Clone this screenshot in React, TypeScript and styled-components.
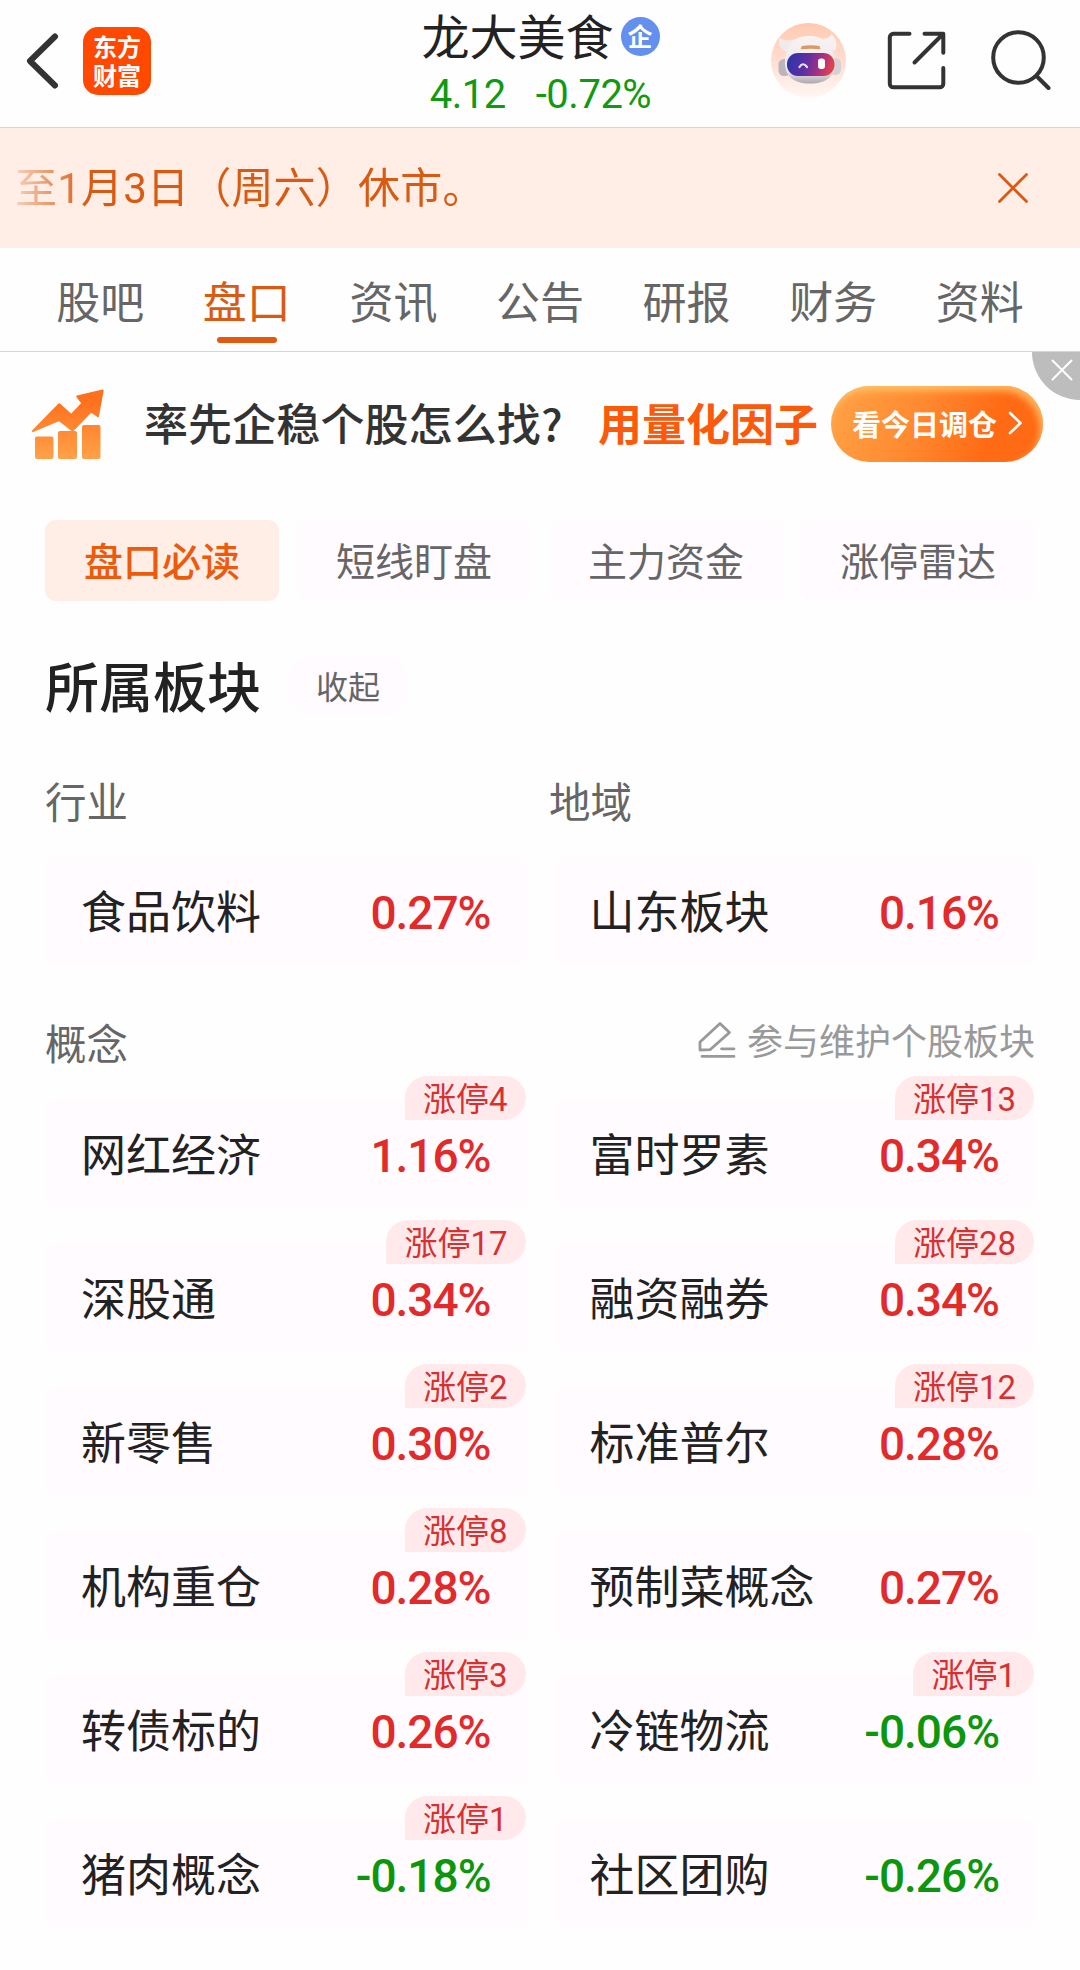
import React from "react";
import styled, { createGlobalStyle } from "styled-components";

const GlobalStyle = createGlobalStyle`
  *, *::before, *::after { box-sizing: border-box; }
  body {
    margin: 0;
    background: #fefefe;
    font-family: Roboto, "Noto Sans CJK SC", sans-serif;
    color: #222;
  }
  button { font: inherit; color: inherit; border: 0; background: none; padding: 0; }
  svg { display: block; flex: none; }
`;

const Page = styled.div`
  width: 1080px;
  height: 1970px;
  overflow: hidden;
  background: #fefefe;
`;

/* Header */

const Header = styled.header`
  display: grid;
  grid-template-columns: 1fr auto 1fr;
  height: 128px;
  padding: 0 24px 0 25px;
  border-bottom: 1px solid #d8d4d3;
`;

const HeaderSide = styled.div<{ $end?: boolean }>`
  display: flex;
  align-items: center;
  justify-content: ${(p) => (p.$end ? "flex-end" : "flex-start")};
  height: 121px;
  padding-right: ${(p) => (p.$end ? 5 : 0)}px;
`;

const Logo = styled.div`
  width: 68px;
  height: 68px;
  margin-left: 22px;
  padding-top: 4px;
  border-radius: 15px;
  background: #ff4800;
  color: #fff;
  font: 700 24px/29px "Noto Sans CJK SC", sans-serif;
  text-align: center;
`;

const StockTitle = styled.div`
  display: flex;
  flex-direction: column;
  align-items: center;
`;

const StockName = styled.h1`
  display: flex;
  align-items: center;
  gap: 7px;
  margin: 0;
  padding-top: 11px;
  height: 67px;
  font-size: 48px;
  line-height: 60px;
  font-weight: 400;
`;

const CompanyMark = styled.span`
  width: 39px;
  height: 39px;
  margin-top: -6px;
  border-radius: 50%;
  background: #638fee;
  color: #fff;
  font: 700 25px/37px "Noto Sans CJK SC", sans-serif;
  text-align: center;
`;

const Quote = styled.div`
  display: flex;
  gap: 30px;
  margin-top: 5px;
  color: #119a11;
  font-size: 40px;
  line-height: 46px;
  letter-spacing: -0.5px;
`;

const IconButton = styled.button<{ $gap?: number }>`
  margin-left: ${(p) => p.$gap ?? 0}px;
`;

/* Notice */

const Notice = styled.div`
  display: flex;
  align-items: center;
  justify-content: space-between;
  height: 120px;
  padding: 0 52px 0 15px;
  background: #ffeee6;
`;

const NoticeText = styled.span`
  padding-top: 2px;
  color: #d95a12;
  font-size: 42px;
  line-height: 60px;
  letter-spacing: 0.2px;
  mask-image: linear-gradient(90deg, rgba(0, 0, 0, 0.2) 0, #000 74px);
`;

/* Tabs */

const Tabs = styled.nav`
  display: grid;
  grid-template-columns: repeat(7, 1fr);
  height: 104px;
  padding: 0 27px;
  border-bottom: 1px solid #d6d6d6;
`;

const Tab = styled.button<{ $active?: boolean }>`
  display: flex;
  flex-direction: column;
  align-items: center;
  padding-top: 26px;
  font-size: 44px;
  line-height: 60px;
  color: ${(p) => (p.$active ? "#d95a12" : "#666")};
  &::after {
    content: "";
    width: 60px;
    height: 6px;
    margin-top: 3px;
    border-radius: 3px;
    background: ${(p) => (p.$active ? "#e05a10" : "transparent")};
  }
`;

/* Promotion */

const Promo = styled.section`
  position: relative;
  display: flex;
  align-items: center;
  height: 144px;
  padding: 0 37px 0 31px;
`;

const PromoQuestion = styled.span`
  width: 454px;
  margin: -5px 0 0 39px;
  color: #333;
  font: 500 44px/60px "Noto Sans CJK SC", sans-serif;
  letter-spacing: 0.1px;
`;

const PromoAnswer = styled.span`
  margin-top: -5px;
  color: #fa5a0a;
  font: 700 44px/60px "Noto Sans CJK SC", sans-serif;
`;

const PromoButton = styled.button`
  display: flex;
  align-items: center;
  gap: 11px;
  width: 212px;
  height: 76px;
  margin-left: auto;
  padding: 0 0 3px 21px;
  border-radius: 38px;
  background: linear-gradient(110deg, #ffa044 5%, #ff8a30 40%, #ff6a14 75%);
  box-shadow: inset -3px 5px 7px rgba(255, 205, 115, 0.75);
  color: #fff;
  font: 700 29px/40px "Noto Sans CJK SC", sans-serif;
`;

const PromoClose = styled.button`
  position: absolute;
  top: 0;
  right: 0;
  display: flex;
  align-items: flex-start;
  width: 48px;
  height: 48px;
  padding: 7px 0 0 19px;
  border-bottom-left-radius: 48px;
  background: #bdbdbd;
`;

/* Content */

const Content = styled.main`
  padding: 24px 45px 0;
`;

const Chips = styled.div`
  display: grid;
  grid-template-columns: repeat(4, 1fr);
  gap: 18px;
`;

const Chip = styled.button<{ $active?: boolean }>`
  height: 81px;
  padding-top: 6px;
  border-radius: 11px;
  font-size: 39px;
  line-height: 75px;
  background: ${(p) => (p.$active ? "#ffeee6" : "#fffbff")};
  color: ${(p) => (p.$active ? "#ee5a0c" : "#666")};
  font-weight: ${(p) => (p.$active ? 500 : 400)};
`;

const SectionHead = styled.div`
  display: flex;
  align-items: center;
  gap: 25px;
  height: 60px;
  margin-top: 54px;
`;

const SectionTitle = styled.h2`
  margin: 0;
  padding-top: 10px;
  font-size: 54px;
  line-height: 66px;
  font-weight: 500;
`;

const FoldButton = styled.button`
  width: 124px;
  height: 60px;
  margin-top: -1px;
  border-radius: 30px;
  background: #fffbff;
  color: #666;
  font-size: 32px;
`;

const LabelRow = styled.div<{ $top: number }>`
  display: grid;
  grid-template-columns: 1fr 486px;
  align-items: center;
  height: 56px;
  margin-top: ${(p) => p.$top}px;
`;

const Label = styled.span`
  padding-top: 3px;
  color: #666;
  font-size: 41.5px;
  line-height: 56px;
`;

const EditLink = styled.button`
  display: flex;
  align-items: center;
  justify-content: flex-end;
  gap: 11px;
  height: 48px;
  margin-top: -4px;
  color: #999;
  font-size: 36px;
  line-height: 48px;
  svg { margin-top: -6px; }
`;

const CardGrid = styled.div<{ $top: number }>`
  display: grid;
  grid-template-columns: 1fr 1fr;
  gap: 36px 27px;
  margin-top: ${(p) => p.$top}px;
`;

const Card = styled.div`
  position: relative;
  display: flex;
  align-items: center;
  justify-content: space-between;
  height: 108px;
  padding: 0 36px;
  border-radius: 11px;
  background: #fffbff;
`;

const CardName = styled.span`
  padding-top: 6px;
  font-size: 45px;
  line-height: 60px;
`;

const Change = styled.span<{ $down: boolean }>`
  padding-top: 3px;
  color: ${(p) => (p.$down ? "#0c960c" : "#e22a2a")};
  font-size: 46px;
  line-height: 60px;
  font-weight: 500;
  letter-spacing: -1px;
`;

const LimitBadge = styled.span`
  position: absolute;
  top: -24px;
  right: 1px;
  height: 44px;
  padding: 2px 18px 0;
  border-radius: 22px 22px 22px 0;
  background: #ffe9eb;
  color: #d63030;
  font-size: 33px;
  line-height: 44px;
`;

type Sector = { name: string; change: string; limit?: number };

const tabs = ["股吧", "盘口", "资讯", "公告", "研报", "财务", "资料"];
const chips = ["盘口必读", "短线盯盘", "主力资金", "涨停雷达"];

const basics: Sector[] = [
  { name: "食品饮料", change: "0.27%" },
  { name: "山东板块", change: "0.16%" },
];

const concepts: Sector[] = [
  { name: "网红经济", change: "1.16%", limit: 4 },
  { name: "富时罗素", change: "0.34%", limit: 13 },
  { name: "深股通", change: "0.34%", limit: 17 },
  { name: "融资融券", change: "0.34%", limit: 28 },
  { name: "新零售", change: "0.30%", limit: 2 },
  { name: "标准普尔", change: "0.28%", limit: 12 },
  { name: "机构重仓", change: "0.28%", limit: 8 },
  { name: "预制菜概念", change: "0.27%" },
  { name: "转债标的", change: "0.26%", limit: 3 },
  { name: "冷链物流", change: "-0.06%", limit: 1 },
  { name: "猪肉概念", change: "-0.18%", limit: 1 },
  { name: "社区团购", change: "-0.26%" },
];

const BackIcon = () => (
  <svg width="36" height="58" viewBox="0 0 36 58" fill="none" stroke="#333" strokeWidth="6" strokeLinecap="round" strokeLinejoin="round">
    <path d="M30 4.5 5 29l25 24.500" />
  </svg>
);

const RobotIcon = () => (
  <svg width="75" height="75" viewBox="0 0 75 75">
    <defs>
      <linearGradient id="halo" x1="0" y1="0" x2="0" y2="1">
        <stop offset="0" stopColor="#ffc9b0" />
        <stop offset="0.55" stopColor="#ffe0d3" />
        <stop offset="1" stopColor="#fff8f5" />
      </linearGradient>
      <linearGradient id="helmet" x1="0" y1="0" x2="0" y2="1">
        <stop offset="0" stopColor="#f8f3f3" />
        <stop offset="0.75" stopColor="#ebe6e9" />
        <stop offset="1" stopColor="#aca7ae" />
      </linearGradient>
      <linearGradient id="visor" x1="0" y1="0" x2="1" y2="0.15">
        <stop offset="0" stopColor="#2a35a8" />
        <stop offset="0.45" stopColor="#5c2fa4" />
        <stop offset="0.75" stopColor="#a62f82" />
        <stop offset="1" stopColor="#dc4250" />
      </linearGradient>
    </defs>
    <circle cx="37.500" cy="37.500" r="37.500" fill="url(#halo)" />
    <rect x="7.500" y="36" width="12" height="17" rx="5.500" fill="#bab5bb" />
    <rect x="58" y="35" width="12" height="17" rx="5.500" fill="#d6d1d6" />
    <path d="M8.500 14.500c-2 8 2 13 8 14.500l9-13c-7 2-13 2-17-1.500Z" fill="#f1eaea" />
    <path d="M60 10.500c6 5 7 13 3 18l-11-13c5 0 8-1.500 8-5Z" fill="#f6f0f0" />
    <path d="M38 13c17 0 24 10 25.500 24C65 53 56 60.500 39 60.500S13 53 14 37c1-14 8-24 24-24Z" fill="url(#helmet)" />
    <path d="M31 23q9-1.500 17.500 0l1 3.300q-10-1.300-20 0Z" fill="#dc9a63" />
    <rect x="16" y="30" width="47.500" height="23" rx="11" fill="url(#visor)" />
    <path d="M28.500 44q3.500-5.500 7.500 0" fill="none" stroke="#e9e4ff" strokeWidth="2.200" strokeLinecap="round" />
    <rect x="47" y="35.500" width="7" height="10.500" rx="3" fill="#fff" />
  </svg>
);

const ShareIcon = () => (
  <svg width="62" height="62" viewBox="0 0 62 62" fill="none" stroke="#333" strokeWidth="4" strokeLinecap="round" strokeLinejoin="round">
    <path d="M23.500 3.800H7.300a3.500 3.500 0 0 0-3.500 3.500v46.500a3.500 3.500 0 0 0 3.500 3.500h46.500a3.500 3.500 0 0 0 3.500-3.500V38M38.500 3.800h18.800v19M28.500 32.500 56.500 4.500" />
  </svg>
);

const SearchIcon = () => (
  <svg width="62" height="62" viewBox="0 0 62 62" fill="none" stroke="#333" strokeWidth="4" strokeLinecap="round">
    <circle cx="29.500" cy="27.500" r="25.300" />
    <path d="M47.500 46 59.500 58" />
  </svg>
);

const CrossIcon = ({ size, color, weight }: { size: number; color: string; weight: number }) => (
  <svg width={size} height={size} viewBox={`0 0 ${size} ${size}`} stroke={color} strokeWidth={weight} strokeLinecap="round">
    <path d={`M1.500 1.500 ${size - 1.5} ${size - 1.5}M${size - 1.5} 1.500 1.500 ${size - 1.5}`} />
  </svg>
);

const GrowthIcon = () => (
  <svg width="74" height="71" viewBox="0 0 74 71">
    <defs>
      <linearGradient id="growth" gradientUnits="userSpaceOnUse" x1="0" y1="0" x2="0" y2="70">
        <stop offset="0.15" stopColor="#ff6f1c" />
        <stop offset="1" stopColor="#ffa24a" />
      </linearGradient>
    </defs>
    <g fill="url(#growth)" stroke="url(#growth)" strokeWidth="2" strokeLinejoin="round">
      <path d="M2 42 28.200 15.300 40.300 26 51.500 14.300 46.200 7.500 71.600 1.500 67 27.300 60 22.500 41.500 41.500 28 31Z" />
      <rect x="5" y="48.500" width="16.500" height="20.500" rx="1" />
      <rect x="28" y="43" width="17" height="26" rx="1" />
      <rect x="52" y="37" width="16.500" height="32" rx="1" />
    </g>
  </svg>
);

const ChevronIcon = () => (
  <svg width="15" height="24" viewBox="0 0 15 24" fill="none" stroke="#fff" strokeWidth="2.600" strokeLinecap="round" strokeLinejoin="round">
    <path d="M2 2 12.500 12 2 22" />
  </svg>
);

const PencilIcon = () => (
  <svg width="38" height="38" viewBox="0 0 38 38" fill="none" stroke="#999" strokeWidth="2.800" strokeLinecap="round" strokeLinejoin="round">
    <path d="M2 29V21L22 2.500 31.500 11.500 12 28.700ZM23.500 27.800H36M4 35.300H36" />
  </svg>
);

const SectorCard = ({ name, change, limit }: Sector) => (
  <Card>
    <CardName>{name}</CardName>
    <Change $down={change.startsWith("-")}>{change}</Change>
    {limit !== undefined && <LimitBadge>涨停{limit}</LimitBadge>}
  </Card>
);

export default function App() {
  return (
    <Page>
      <GlobalStyle />
      <Header>
        <HeaderSide>
          <IconButton aria-label="返回"><BackIcon /></IconButton>
          <Logo>东方<br />财富</Logo>
        </HeaderSide>
        <StockTitle>
          <StockName>龙大美食<CompanyMark>企</CompanyMark></StockName>
          <Quote><span>4.12</span><span>-0.72%</span></Quote>
        </StockTitle>
        <HeaderSide $end>
          <IconButton><RobotIcon /></IconButton>
          <IconButton $gap={40}><ShareIcon /></IconButton>
          <IconButton $gap={41}><SearchIcon /></IconButton>
        </HeaderSide>
      </Header>
      <Notice>
        <NoticeText>至1月3日（周六）休市。</NoticeText>
        <IconButton aria-label="关闭"><CrossIcon size={30} color="#d95a12" weight={2.8} /></IconButton>
      </Notice>
      <Tabs>
        {tabs.map((t) => <Tab key={t} $active={t === "盘口"}>{t}</Tab>)}
      </Tabs>
      <Promo>
        <GrowthIcon />
        <PromoQuestion>率先企稳个股怎么找?</PromoQuestion>
        <PromoAnswer>用量化因子</PromoAnswer>
        <PromoButton>看今日调仓<ChevronIcon /></PromoButton>
        <PromoClose aria-label="关闭"><CrossIcon size={22} color="#fff" weight={2} /></PromoClose>
      </Promo>
      <Content>
        <Chips>
          {chips.map((c, i) => <Chip key={c} $active={i === 0}>{c}</Chip>)}
        </Chips>
        <SectionHead>
          <SectionTitle>所属板块</SectionTitle>
          <FoldButton>收起</FoldButton>
        </SectionHead>
        <LabelRow $top={58}>
          <Label>行业</Label>
          <Label>地域</Label>
        </LabelRow>
        <CardGrid $top={28}>
          {basics.map((s) => <SectorCard key={s.name} {...s} />)}
        </CardGrid>
        <LabelRow $top={50}>
          <Label>概念</Label>
          <EditLink><PencilIcon />参与维护个股板块</EditLink>
        </LabelRow>
        <CardGrid $top={29}>
          {concepts.map((s) => <SectorCard key={s.name} {...s} />)}
        </CardGrid>
      </Content>
    </Page>
  );
}
